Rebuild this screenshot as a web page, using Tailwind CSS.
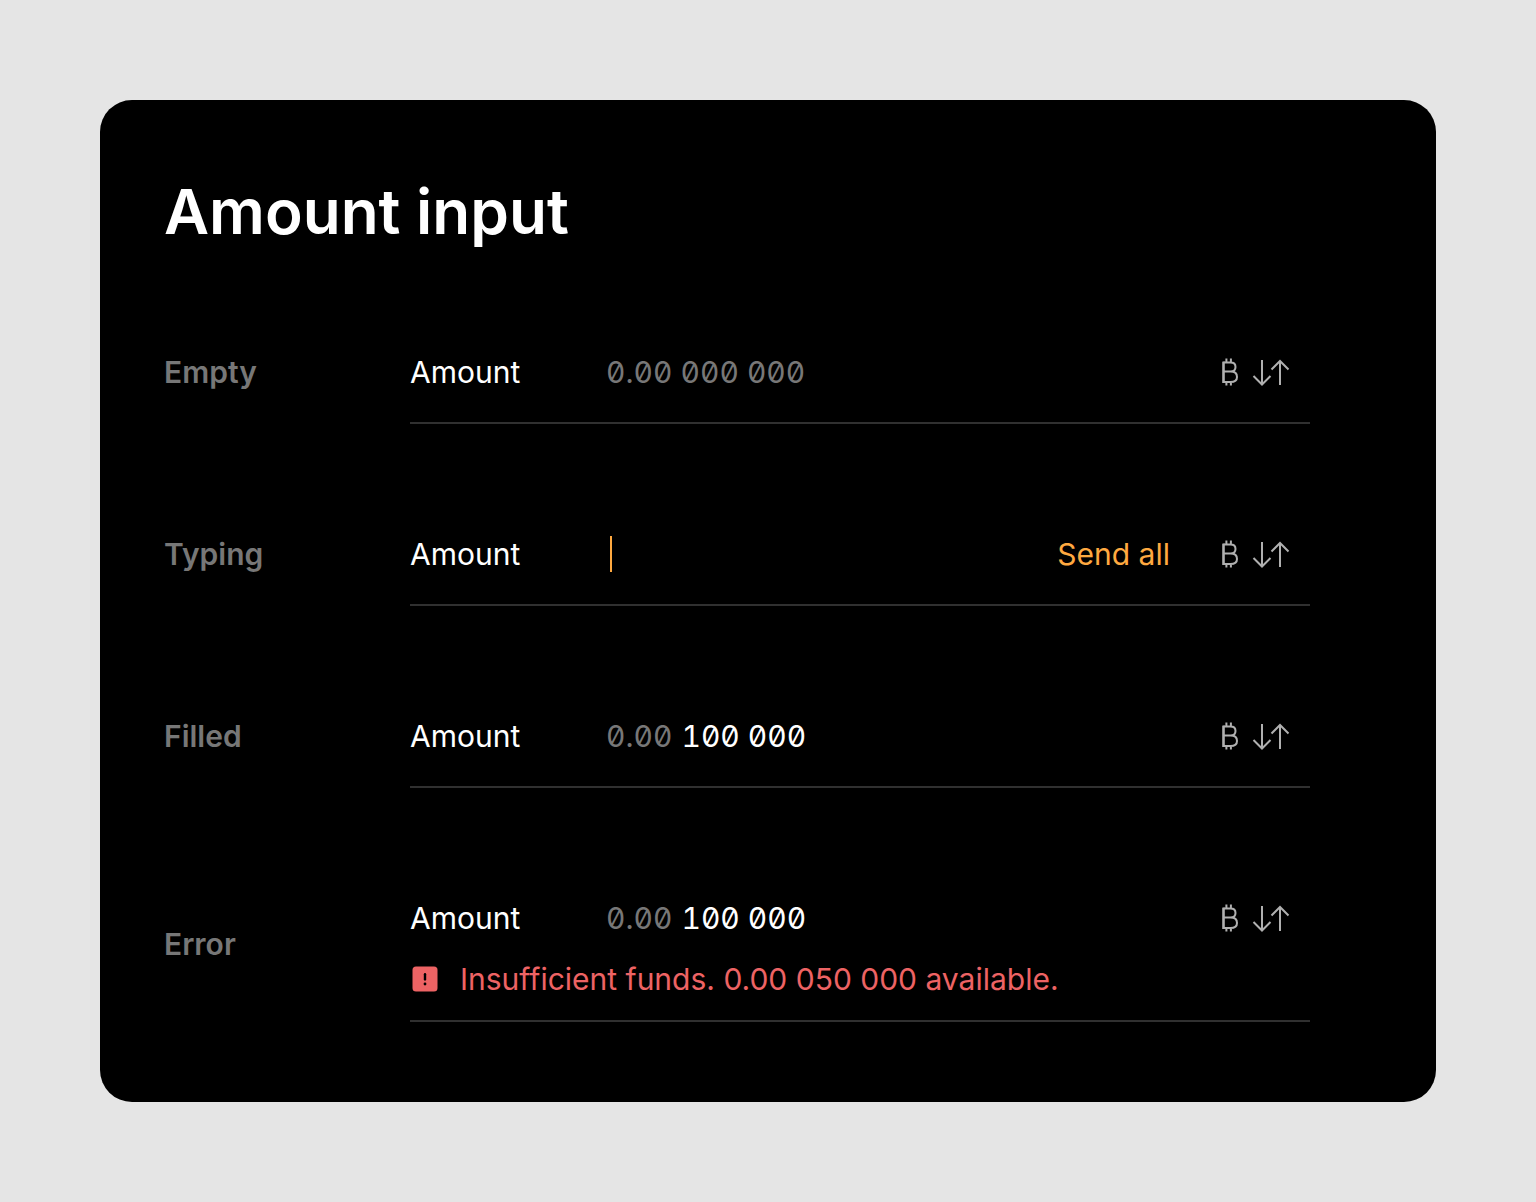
<!DOCTYPE html>
<html lang="en">
<head>
<meta charset="utf-8">
<meta name="viewport" content="width=device-width, initial-scale=1">
<title>Amount input</title>
<script src="https://cdn.jsdelivr.net/npm/@tailwindcss/browser@4"></script>
</head>
<body class="min-h-screen bg-[#e5e5e5] p-[100px] font-['Inter',sans-serif] text-[30px] leading-[50px] font-normal text-white">
<svg class="hidden" aria-hidden="true">
  <symbol id="bitcoin" viewBox="0 0 20 28">
    <path d="M3.300 4.600H10.500C13.500 4.600 15.500 6.200 15.500 9S13.500 13.600 10.500 13.600H3.300M10.500 13.600C14.600 13.600 17 15.500 17 18.900S14.600 24 10.500 24H3.300M6.400 .5V4.500M10.900 .5V4.500M6.400 24V27.500M10.900 24V27.500" fill="none" stroke="currentColor" stroke-width="2"/>
    <path d="M3.500 3.600V25" stroke="currentColor" stroke-width="2.600"/>
  </symbol>
  <symbol id="swap" viewBox="0 0 38 28">
    <path d="M10 2V27M1.500 18L10 26.500L18.500 18M28 27V3M19.500 11.500L28 3L36.500 11.500" fill="none" stroke="currentColor" stroke-width="2"/>
  </symbol>
</svg>
<main class="rounded-[32px] bg-black pt-20 pr-[126px] pb-20 pl-16">
  <h1 class="text-[62px] leading-16 font-semibold">Amount input</h1>
  <div class="mt-[78px] flex flex-col gap-20">
    <section class="flex items-center">
      <h2 class="w-[246px] shrink-0 pb-0.5 font-semibold text-[#777]">Empty</h2>
      <div class="min-w-0 grow border-b-2 border-[#303030] py-[25px]">
        <div class="flex items-center pr-5">
          <label for="empty" class="w-[196px] shrink-0">Amount</label>
          <input id="empty" type="text" inputmode="decimal" placeholder="0.00 000 000" class="h-[50px] min-w-0 grow bg-transparent slashed-zero tabular-nums outline-none placeholder:text-[#777]">
          <button type="button" aria-label="Switch unit" class="flex items-center gap-3 text-[#b0b0b0]">
            <svg class="h-7 w-5"><use href="#bitcoin"/></svg>
            <svg class="h-7 w-[38px]"><use href="#swap"/></svg>
          </button>
        </div>
      </div>
    </section>
    <section class="flex items-center">
      <h2 class="w-[246px] shrink-0 pb-0.5 font-semibold text-[#777]">Typing</h2>
      <div class="min-w-0 grow border-b-2 border-[#303030] py-[25px]">
        <div class="flex items-center pr-5">
          <label for="typing" class="w-[200px] shrink-0">Amount</label>
          <span class="h-9 w-0.5 bg-[#ffa940]"></span>
          <input id="typing" type="text" inputmode="decimal" class="h-[50px] min-w-0 grow bg-transparent slashed-zero tabular-nums caret-[#ffa940] outline-none">
          <button type="button" class="mr-[50px] shrink-0 whitespace-nowrap text-[#ffa940]">Send all</button>
          <button type="button" aria-label="Switch unit" class="flex items-center gap-3 text-[#b0b0b0]">
            <svg class="h-7 w-5"><use href="#bitcoin"/></svg>
            <svg class="h-7 w-[38px]"><use href="#swap"/></svg>
          </button>
        </div>
      </div>
    </section>
    <section class="flex items-center">
      <h2 class="w-[246px] shrink-0 pb-0.5 font-semibold text-[#777]">Filled</h2>
      <div class="min-w-0 grow border-b-2 border-[#303030] py-[25px]">
        <div class="flex items-center pr-5">
          <label for="filled" class="w-[196px] shrink-0">Amount</label>
          <span class="mr-[9px] text-[#777] slashed-zero tabular-nums">0.00</span>
          <input id="filled" type="text" inputmode="decimal" value="100 000" class="h-[50px] min-w-0 grow bg-transparent slashed-zero tabular-nums outline-none">
          <button type="button" aria-label="Switch unit" class="flex items-center gap-3 text-[#b0b0b0]">
            <svg class="h-7 w-5"><use href="#bitcoin"/></svg>
            <svg class="h-7 w-[38px]"><use href="#swap"/></svg>
          </button>
        </div>
      </div>
    </section>
    <section class="flex items-center">
      <h2 class="w-[246px] shrink-0 pb-0.5 font-semibold text-[#777]">Error</h2>
      <div class="min-w-0 grow border-b-2 border-[#303030] pt-[25px] pb-4">
        <div class="flex items-center pr-5">
          <label for="error" class="w-[196px] shrink-0">Amount</label>
          <span class="mr-[9px] text-[#777] slashed-zero tabular-nums">0.00</span>
          <input id="error" type="text" inputmode="decimal" value="100 000" aria-invalid="true" aria-describedby="error-text" class="h-[50px] min-w-0 grow bg-transparent slashed-zero tabular-nums outline-none">
          <button type="button" aria-label="Switch unit" class="flex items-center gap-3 text-[#b0b0b0]">
            <svg class="h-7 w-5"><use href="#bitcoin"/></svg>
            <svg class="h-7 w-[38px]"><use href="#swap"/></svg>
          </button>
        </div>
        <p id="error-text" class="mt-[11px] flex items-center gap-5 text-[#ed6364]">
          <svg class="size-[30px] shrink-0" viewBox="0 0 30 30" aria-hidden="true">
            <rect x="2.500" y="2.500" width="25" height="25" rx="3.500" fill="currentColor"/>
            <path d="M15 10.200V15.400" stroke="#000" stroke-width="2.400" stroke-linecap="round"/>
            <circle cx="15" cy="20" r="1.400"/>
          </svg>
          Insufficient funds. 0.00 050 000 available.
        </p>
      </div>
    </section>
  </div>
</main>
</body>
</html>
